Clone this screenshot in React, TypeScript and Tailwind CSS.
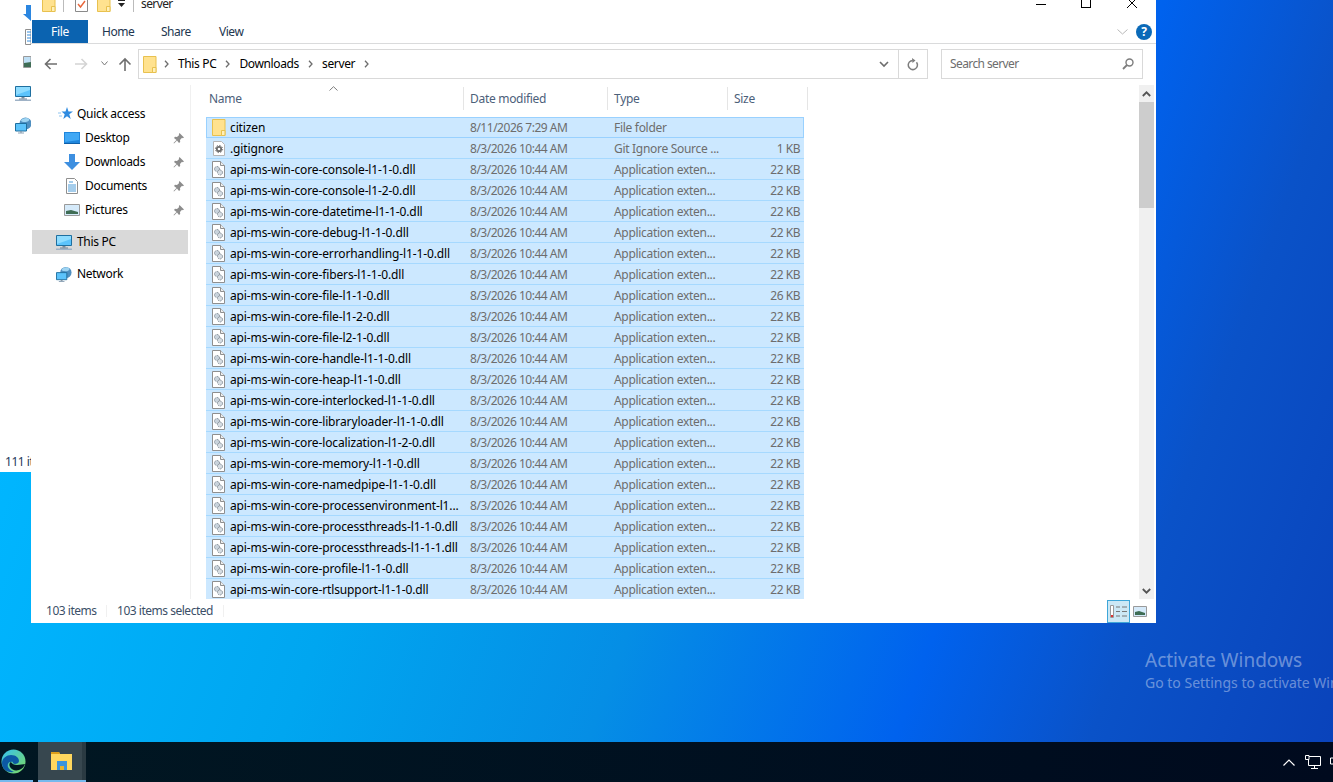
import React from 'react';

const FILES: [string, string][] = [
  ['api-ms-win-core-console-l1-1-0.dll', '22 KB'],
  ['api-ms-win-core-console-l1-2-0.dll', '22 KB'],
  ['api-ms-win-core-datetime-l1-1-0.dll', '22 KB'],
  ['api-ms-win-core-debug-l1-1-0.dll', '22 KB'],
  ['api-ms-win-core-errorhandling-l1-1-0.dll', '22 KB'],
  ['api-ms-win-core-fibers-l1-1-0.dll', '22 KB'],
  ['api-ms-win-core-file-l1-1-0.dll', '26 KB'],
  ['api-ms-win-core-file-l1-2-0.dll', '22 KB'],
  ['api-ms-win-core-file-l2-1-0.dll', '22 KB'],
  ['api-ms-win-core-handle-l1-1-0.dll', '22 KB'],
  ['api-ms-win-core-heap-l1-1-0.dll', '22 KB'],
  ['api-ms-win-core-interlocked-l1-1-0.dll', '22 KB'],
  ['api-ms-win-core-libraryloader-l1-1-0.dll', '22 KB'],
  ['api-ms-win-core-localization-l1-2-0.dll', '22 KB'],
  ['api-ms-win-core-memory-l1-1-0.dll', '22 KB'],
  ['api-ms-win-core-namedpipe-l1-1-0.dll', '22 KB'],
  ['api-ms-win-core-processenvironment-l1...', '22 KB'],
  ['api-ms-win-core-processthreads-l1-1-0.dll', '22 KB'],
  ['api-ms-win-core-processthreads-l1-1-1.dll', '22 KB'],
  ['api-ms-win-core-profile-l1-1-0.dll', '22 KB'],
  ['api-ms-win-core-rtlsupport-l1-1-0.dll', '22 KB'],
];

const Folder = ({ className = '' }: { className?: string }) => (
  <svg className={className} width="14" height="17" viewBox="0 0 14 17">
    <path d="M.5.5h12.5v16H.5z" fill="#ffe28f" stroke="#e8c14f" />
    <path d="M9.5 16.5v-5h3.5v5z" fill="#fff0b8" stroke="#e8c14f" />
  </svg>
);

const DllIcon = () => (
  <svg width="13" height="17" viewBox="0 0 13 17">
    <path d="M.5.5h8l4 4v12H.5z" fill="#fff" stroke="#8f8f8f" />
    <path d="M8.5.5v4h4" fill="#eee" stroke="#8f8f8f" />
    <circle cx="5" cy="8" r="2.5" fill="#c9d3dc" stroke="#7f8a94" strokeDasharray="1.5 .8" />
    <circle cx="8" cy="11.5" r="2.5" fill="#d6dde3" stroke="#8a949c" strokeDasharray="1.5 .8" />
  </svg>
);

const IgnoreIcon = () => (
  <svg className="ml-px" width="12" height="15" viewBox="0 0 12 15">
    <path d="M.5.5h8l3 3v11H.5z" fill="#fff" stroke="#b5b5b5" />
    <circle cx="6" cy="8" r="2.2" fill="none" stroke="#6c6c6c" strokeWidth="1.8" />
    <circle cx="6" cy="8" r="3.6" fill="none" stroke="#6c6c6c" strokeWidth="1" strokeDasharray="1.4 1.4" />
  </svg>
);

const Monitor = () => (
  <svg width="16" height="15" viewBox="0 0 16 15">
    <path d="M.5.5h15v10H.5z" fill="#5cc3fb" stroke="#1f6f9f" />
    <path d="M1 1h14v3L1 9z" fill="#8edcff" />
    <path d="M6.5 11h3v1.5h-3z" fill="#7a8a99" />
    <path d="M0 13.5h16V15H0z" fill="#9fb2c6" />
    <path d="M4 12.5h8v1H4z" fill="#6f8296" />
  </svg>
);

const NetworkIcon = () => (
  <svg width="17" height="17" viewBox="0 0 17 17">
    <circle cx="10.5" cy="6.5" r="6" fill="#4f8fc0" />
    <path d="M6 3c2-2 6-3 8-1 1 2-2 3-4 3S6 5 6 3z" fill="#9ed4f2" />
    <path d="M.5 6.5h11v7.5H.5z" fill="#5cc3fb" stroke="#1f6f9f" />
    <path d="M5 14.5h2v1H5z" fill="#7a8a99" />
    <path d="M3 15.5h6v1H3z" fill="#8aa0b4" />
  </svg>
);

const Pin = () => (
  <svg width="11" height="11" viewBox="0 0 11 11" fill="#8c8c8c">
    <path d="M6.5 0 11 4.5 9.8 5.2 9 4.800 7 7l.2 2L6 10 4 7.500 1 10.500.5 10 3.500 7 1 5l1-1.200 2 .2 2.200-2-.4-.8z" />
  </svg>
);

function NavRow({ icon, label, pinned, indent }: { icon: React.ReactNode; label: string; pinned?: boolean; indent?: boolean }) {
  return (
    <div className={`flex h-[24px] items-center ${indent ? 'pl-[32px]' : 'pl-[24px]'}`}>
      <span className="mr-[5px] flex h-[17px] w-[16px] items-center justify-center">{icon}</span>
      <span className="text-black">{label}</span>
      {pinned && (
        <span className="ml-auto mr-[4px]">
          <Pin />
        </span>
      )}
    </div>
  );
}

function FileRow({ icon, name, date, type, size, first }: { icon: React.ReactNode; name: string; date: string; type: string; size: string; first?: boolean }) {
  return (
    <div className={`flex h-[21px] w-[598px] shrink-0 items-center bg-[#cce8ff] ${first ? 'border border-[#99d1ff]' : 'border-b border-b-[#a6d9ff] pt-px'}`}>
      <div className={`flex items-center text-black tracking-[-0.01em] ${first ? 'w-[263px] pl-[5px]' : 'w-[264px] pl-[6px]'}`}>
        <span className="flex w-[18px] justify-start">{icon}</span>
        <span>{name}</span>
      </div>
      <div className="w-[144px] tracking-[-0.04em] text-[#6d6d6d]">{date}</div>
      <div className="w-[120px] text-[#6d6d6d]">{type}</div>
      <div className="flex-1 pr-[4px] text-right tracking-[-0.04em] text-[#6d6d6d]">{size}</div>
    </div>
  );
}

function HeaderCell({ label, width }: { label: string; width: string }) {
  return (
    <div className={`flex h-[23px] items-center border-r border-r-[#e5e5e5] pt-px text-[#4c607a] ${width}`}>{label}</div>
  );
}

function Crumb({ className = '' }: { className?: string }) {
  return (
    <svg className={className} width="5" height="8" viewBox="0 0 5 8">
      <path d="M1 .8 4 4 1 7.200" fill="none" stroke="#6d6d6d" strokeWidth="1.300" />
    </svg>
  );
}

export default function App() {
  return (
    <div className="flex h-[782px] w-[1333px] flex-col overflow-hidden bg-[linear-gradient(110deg,#00b6ff_10%,#00a6f0_34%,#058ee5_53%,#0062ee_72%,#0a52c8_84%,#0a42ba_100%)] font-['Noto_Sans',sans-serif] text-[12px] leading-none tracking-[-0.025em]">
      <div className="relative flex min-h-0 flex-1 items-start">
        {/* desktop window behind */}
        <div className="flex h-[472px] w-[31px] shrink-0 flex-col overflow-hidden bg-white">
          <svg className="ml-[23px] mt-[5px] shrink-0" width="8" height="16" viewBox="0 0 8 16">
            <path d="M3 0h5v16L0 9h3z" fill="#2b86e0" />
          </svg>
          <svg className="ml-[25px] mt-[8px] shrink-0" width="6" height="16" viewBox="0 0 6 16">
            <path d="M.5.500H6v15H.5z" fill="#fff" stroke="#8f8f8f" />
            <path d="M2 3h4M2 6h4M2 9h4M2 12h4" stroke="#3b8fdc" />
          </svg>
          <svg className="ml-[23px] mt-[11px] shrink-0" width="8" height="12" viewBox="0 0 8 12">
            <path d="M.5.500H8v11H.5z" fill="#bfe0f6" stroke="#9a9a9a" />
            <path d="M1 7l7-1v5H1z" fill="#3f6d55" />
          </svg>
          <div className="ml-[15px] mt-[18px] shrink-0">
            <Monitor />
          </div>
          <div className="ml-[15px] mt-[16px] shrink-0">
            <NetworkIcon />
          </div>
          <div className="ml-[5px] mt-[322px] whitespace-nowrap tracking-[-0.04em] text-[#1e395b]">111 items</div>
        </div>

        {/* explorer window */}
        <div className="flex h-[623px] w-[1125px] shrink-0 flex-col overflow-hidden bg-white">
          <div className="flex h-[20px] shrink-0 items-start">
            <div className="ml-[11px] -mt-[5px] flex items-center">
              <Folder />
              <span className="ml-[7px] h-[17px] w-px bg-[#bbb]" />
              <svg className="ml-[11px]" width="13" height="17" viewBox="0 0 13 17">
                <path d="M.5.500h12v16H.5z" fill="#fff" stroke="#8a8a8a" />
                <path d="M3 9l2.500 3L10 6" fill="none" stroke="#e8663a" strokeWidth="1.400" />
              </svg>
              <span className="ml-[9px]">
                <Folder />
              </span>
              <svg className="ml-[7px]" width="8" height="8" viewBox="0 0 8 8">
                <path d="M0 0h7v1H0zM0 3h7L3.500 7z" fill="#222" />
              </svg>
              <span className="ml-[7px] h-[17px] w-px bg-[#bbb]" />
              <span className="ml-[7px] tracking-[-0.05em] text-[#222]">server</span>
            </div>
            <div className="ml-auto -mt-[1px] flex items-start">
              <span className="mr-[35px] mt-[5px] h-px w-[10px] bg-black" />
              <span className="mr-[36px] -mt-[1px] h-[10px] w-[10px] border border-black" />
              <svg className="mr-[19px] -mt-[1px]" width="10" height="10" viewBox="0 0 10 10">
                <path d="M0 0l10 10M10 0L0 10" stroke="#000" />
              </svg>
            </div>
          </div>

          <div className="flex h-[24px] shrink-0 items-stretch border-b border-b-[#dadbdc] pl-px">
            <div className="flex w-[56px] items-center justify-center bg-[#0b63b0] text-white">File</div>
            <div className="flex items-center pl-[14px] tracking-[-0.04em] text-[#22364f]">
              <span className="w-[59px]">Home</span>
              <span className="w-[58px]">Share</span>
              <span>View</span>
            </div>
            <div className="ml-auto flex items-center pr-[4px]">
              <svg width="11" height="6" viewBox="0 0 11 6">
                <path d="M.5.500l5 4.500 5-4.500" fill="none" stroke="#b8b8b8" />
              </svg>
              <span className="ml-[8px] flex h-[16px] w-[16px] items-center justify-center rounded-full bg-[#0b6ab8] text-[12px] font-bold text-white">?</span>
            </div>
          </div>

          <div className="flex h-[41px] shrink-0 items-start pt-[5px]">
            <div className="flex h-[29px] w-[107px] shrink-0 items-center">
              <svg className="ml-[13px]" width="14" height="12" viewBox="0 0 14 12">
                <path d="M13 6H2M6.500 1 1.500 6l5 5" fill="none" stroke="#6f6f6f" strokeWidth="1.600" />
              </svg>
              <svg className="ml-[16px]" width="14" height="12" viewBox="0 0 14 12">
                <path d="M1 6h11M7.500 1l5 5-5 5" fill="none" stroke="#d4d4d4" strokeWidth="1.600" />
              </svg>
              <svg className="ml-[13px]" width="7" height="5" viewBox="0 0 7 5">
                <path d="M.5.500 3.500 4l3-3.500" fill="none" stroke="#777" />
              </svg>
              <svg className="ml-[10px]" width="14" height="14" viewBox="0 0 14 14">
                <path d="M7 14V2M1.500 7.500 7 2l5.500 5.500" fill="none" stroke="#6f6f6f" strokeWidth="1.600" />
              </svg>
            </div>
            <div className="flex h-[30px] w-[790px] shrink-0 items-center border border-[#d9d9d9] tracking-[-0.03em] text-black">
              <span className="ml-[4px]">
                <Folder />
              </span>
              <Crumb className="ml-[7px]" />
              <span className="ml-[9px]">This PC</span>
              <Crumb className="ml-[9px]" />
              <span className="ml-[9px]">Downloads</span>
              <Crumb className="ml-[9px]" />
              <span className="ml-[9px]">server</span>
              <Crumb className="ml-[9px]" />
              <svg className="ml-auto mr-[9px]" width="10" height="7" viewBox="0 0 10 7">
                <path d="M1 1l4 4 4-4" fill="none" stroke="#6d6d6d" strokeWidth="1.600" />
              </svg>
              <span className="flex h-full w-[29px] items-center justify-center border-l border-l-[#d9d9d9]">
                <svg width="12" height="13" viewBox="0 0 12 13">
                  <path d="M9.500 4.200A4.600 4.600 0 1 1 5.800 2.400" fill="none" stroke="#7d7d7d" strokeWidth="1.500" />
                  <path d="M5 0l3.500 2.500L5.500 5z" fill="#7d7d7d" />
                </svg>
              </span>
            </div>
            <div className="ml-[13px] flex h-[30px] w-[202px] shrink-0 items-center border border-[#d9d9d9] pl-[8px] tracking-[-0.05em] text-[#6d6d6d]">
              <span>Search server</span>
              <svg className="ml-auto mr-[8px]" width="12" height="12" viewBox="0 0 12 12">
                <circle cx="7.500" cy="4.500" r="3.500" fill="none" stroke="#7d7d7d" strokeWidth="1.400" />
                <path d="M5 7l-4 4" stroke="#7d7d7d" strokeWidth="1.800" />
              </svg>
            </div>
          </div>

          <div className="flex min-h-0 flex-1">
            <div className="flex w-[160px] shrink-0 flex-col border-r border-r-[#f0f0f0] pl-px pt-[17px]">
              <div className="w-[156px]">
                <NavRow
                  label="Quick access"
                  icon={
                    <svg className="ml-[2px] shrink-0" width="15" height="14" viewBox="0 0 15 14">
                      <path d="M9 0l1.500 4.500H15l-3.700 2.800 1.400 4.700L9 9.200 5.300 12l1.400-4.700L3.500 4.500H7.500z" fill="#2f8be0" />
                      <path d="M0 6h3M1 9h3" stroke="#8ec4ef" />
                    </svg>
                  }
                />
                <NavRow
                  indent
                  pinned
                  label="Desktop"
                  icon={
                    <svg className="shrink-0" width="16" height="12" viewBox="0 0 16 12">
                      <path d="M0 0h16v12H0z" fill="#1f86dc" />
                      <path d="M1 1h14v7L1 10z" fill="#40a8f5" />
                      <path d="M0 11h16v1H0z" fill="#0f5fa8" />
                    </svg>
                  }
                />
                <NavRow
                  indent
                  pinned
                  label="Downloads"
                  icon={
                    <svg className="shrink-0" width="16" height="16" viewBox="0 0 16 16">
                      <path d="M5 0h6v8h5l-8 8-8-8h5z" fill="#3d8fe0" />
                    </svg>
                  }
                />
                <NavRow
                  indent
                  pinned
                  label="Documents"
                  icon={
                    <svg className="shrink-0" width="12" height="16" viewBox="0 0 12 16">
                      <path d="M.5.500h8l3 3v12H.5z" fill="#fff" stroke="#8f8f8f" />
                      <path d="M3 4h4M2 7h8M2 9h8M2 11h8M2 13h8" stroke="#4b9bd8" />
                    </svg>
                  }
                />
                <NavRow
                  indent
                  pinned
                  label="Pictures"
                  icon={
                    <svg className="shrink-0" width="16" height="12" viewBox="0 0 16 12">
                      <path d="M.5.500h15v11H.5z" fill="#d5eafa" stroke="#9a9a9a" />
                      <path d="M2 7l5-1 7 2v2H2z" fill="#3f6d55" />
                    </svg>
                  }
                />
              </div>
              <div className="mt-[8px] w-[156px] bg-[#d9d9d9]">
                <NavRow label="This PC" icon={<Monitor />} />
              </div>
              <div className="mt-[8px]">
                <NavRow label="Network" icon={<NetworkIcon />} />
              </div>
            </div>

            <div className="flex min-w-0 flex-1 flex-col pl-[15px] pt-[2px]">
              <div className="relative flex shrink-0">
                <HeaderCell label="Name" width="w-[258px] pl-[3px]" />
                <HeaderCell label="Date modified" width="w-[144px] pl-[6px]" />
                <HeaderCell label="Type" width="w-[120px] pl-[6px]" />
                <HeaderCell label="Size" width="w-[80px] pl-[6px]" />
                <svg className="absolute left-[123px] -top-[1px]" width="9" height="5" viewBox="0 0 9 5">
                  <path d="M.5 4.500l4-3.800 4 3.800" fill="none" stroke="#7d7d7d" />
                </svg>
              </div>
              <div className="mt-[7px] flex min-h-0 flex-1 flex-col overflow-hidden">
                <FileRow first icon={<Folder />} name="citizen" date="8/11/2026 7:29 AM" type="File folder" size="" />
                <FileRow icon={<IgnoreIcon />} name=".gitignore" date="8/3/2026 10:44 AM" type="Git Ignore Source ..." size="1 KB" />
                {FILES.map(([name, size]) => (
                  <FileRow key={name} icon={<DllIcon />} name={name} date="8/3/2026 10:44 AM" type="Application exten..." size={size} />
                ))}
              </div>
            </div>

            <div className="flex w-[17px] shrink-0 flex-col pr-[2px]">
              <div className="flex h-[17px] items-center justify-center bg-[#f0f0f0]">
                <svg width="9" height="6" viewBox="0 0 9 6">
                  <path d="M.8 5l3.700-3.700L8.200 5" fill="none" stroke="#555" strokeWidth="1.800" />
                </svg>
              </div>
              <div className="flex flex-1 flex-col bg-[#f0f0f0]">
                <div className="h-[106px] bg-[#cdcdcd]" />
              </div>
              <div className="flex h-[16px] items-center justify-center bg-[#f0f0f0]">
                <svg width="9" height="6" viewBox="0 0 9 6">
                  <path d="M.8 1l3.700 3.700L8.200 1" fill="none" stroke="#555" strokeWidth="1.800" />
                </svg>
              </div>
            </div>
          </div>

          <div className="flex h-[24px] shrink-0 items-center pl-[15px] tracking-[-0.04em] text-[#3b4f68]">
            <span className="w-[60px]">103 items</span>
            <span className="h-[12px] w-px bg-[#f0f0f0]" />
            <span className="ml-[10px] w-[106px]">103 items selected</span>
            <span className="h-[12px] w-px bg-[#f0f0f0]" />
            <div className="ml-auto mr-[9px] flex items-center">
              <span className="flex h-[23px] w-[23px] items-center justify-center border border-[#3ea6d8] bg-[#cce8f5]">
                <svg width="17" height="13" viewBox="0 0 17 13">
                  <path d="M.5.500h3v12h-3z" fill="#fff" stroke="#9a9a9a" />
                  <path d="M6 2h4M12 2h5M6 6.500h4M12 6.500h5M6 11h4M12 11h5" stroke="#777" />
                  <path d="M1 10h2v2H1z" fill="#d33" />
                </svg>
              </span>
              <svg className="ml-[3px]" width="14" height="11" viewBox="0 0 14 11">
                <path d="M.5.500h13v10H.5z" fill="#d5eafa" stroke="#9a9a9a" />
                <path d="M2 6l4-1 6 2v2H2z" fill="#3f6d55" />
              </svg>
            </div>
          </div>
        </div>

        <div className="absolute left-[1145px] top-[649px] whitespace-nowrap tracking-normal text-white/40">
          <div className="text-[19px] leading-[22px]">Activate Windows</div>
          <div className="mt-[3px] text-[14px] leading-[18px]">Go to Settings to activate Windows.</div>
        </div>
      </div>

      <div className="flex h-[40px] shrink-0 items-stretch bg-gradient-to-r from-[#011722] to-[#000a1e]">
        <div className="flex w-[33px] items-center border-b-[2px] border-b-[#76b9ed] pl-px">
          <svg width="25" height="25" viewBox="0 0 25 25">
            <defs>
              <linearGradient id="edge" x1="0" y1="0" x2="1" y2="1">
                <stop offset="0" stopColor="#35c1f1" />
                <stop offset="1" stopColor="#7ddc5f" />
              </linearGradient>
            </defs>
            <circle cx="12.500" cy="12.500" r="12" fill="url(#edge)" />
            <path d="M1 14c0-5 5-8 9-8 5 0 8 3 8 6 0 2-2 3-4 3-1 0-3-1-2-2-4-1-6 2-5 5 1 2 3 4 6 5C6 24 1 20 1 14z" fill="#0c59a4" />
            <path d="M24 15c-1 3-3 5-6 6-4 1-7 0-9-3-1-2-1-4 1-5 1 2 3 3 6 3 3 0 6-1 8-1z" fill="#011722" />
          </svg>
        </div>
        <div className="ml-[5px] flex">
          <div className="flex w-[44px] items-center justify-center border-b-[2px] border-b-[#76b9ed] bg-[#37474f] pl-[4px]">
            <svg width="22" height="18" viewBox="0 0 22 18">
              <path d="M0 0h8l1 2h12v16H0z" fill="#ffd75e" />
              <path d="M0 0h8l1 2H0z" fill="#dd9f1a" />
              <path d="M6 9h10v9h-3v-4H9v4H6z" fill="#3c94dc" />
              <path d="M9 14h4v4H9z" fill="#e8b32e" />
            </svg>
          </div>
          <div className="w-[4px] border-b-[2px] border-b-[#76b9ed] bg-[#2a3a42]" />
        </div>
        <div className="ml-auto flex items-center">
          <svg width="12" height="7" viewBox="0 0 12 7">
            <path d="M.5 6.500 6 1l5.500 5.500" fill="none" stroke="#fff" strokeWidth="1.200" />
          </svg>
          <svg className="ml-[10px]" width="16" height="14" viewBox="0 0 16 14">
            <path d="M3.500 1.500H15.500v9H3.500zM9.500 10.500v3M6 13.500h7" fill="none" stroke="#fff" />
            <path d="M.5.500h3.500v4H.5z" fill="#000a1e" stroke="#fff" />
          </svg>
          <svg className="ml-[9px]" width="3" height="14" viewBox="0 0 3 14">
            <path d="M3 3H.5v6H3" fill="none" stroke="#fff" />
          </svg>
        </div>
      </div>
    </div>
  );
}
